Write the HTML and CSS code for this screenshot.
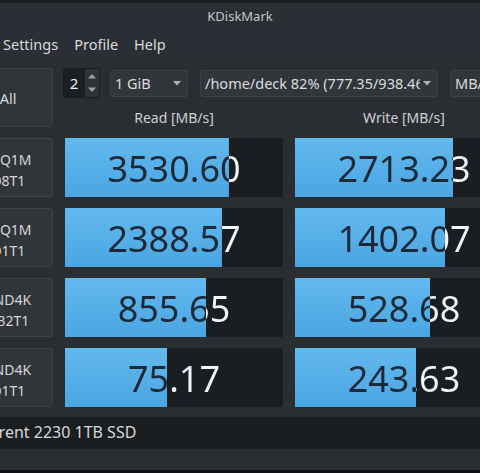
FILE: index.html
```html
<!DOCTYPE html>
<html>
<head>
<meta charset="utf-8">
<link rel="stylesheet" href="styles.css">
</head>
<body>
<div class="edge"></div>
<div class="titlebar">KDiskMark</div>
<div class="menubar">
  <span class="menu">Settings</span>
  <span class="menu">Profile</span>
  <span class="menu">Help</span>
</div>
<div class="grid">
  <button class="btn all">All</button>
  <div class="controls">
    <div class="spin">
      <span class="spin-val">2</span>
      <span class="spin-arrows">
        <svg width="8" height="6" viewBox="0 0 8 6"><path d="M0 5.5 L4 1 L8 5.5 Z" fill="#9ea2a7"/></svg>
        <svg width="8" height="6" viewBox="0 0 8 6"><path d="M0 0.5 L4 5 L8 0.5 Z" fill="#9ea2a7"/></svg>
      </span>
    </div>
    <div class="combo size"><span class="combo-text">1 GiB</span><svg class="caret" width="8" height="5" viewBox="0 0 8 5"><path d="M0 0 L4 4.5 L8 0 Z" fill="#aeb2b6"/></svg></div>
    <div class="combo path"><span class="combo-text">/home/deck 82% (777.35/938.46 GiB)</span><svg class="caret" width="8" height="5" viewBox="0 0 8 5"><path d="M0 0 L4 4.5 L8 0 Z" fill="#aeb2b6"/></svg></div>
    <div class="combo unit"><span class="combo-text">MB/s</span></div>
  </div>
  <div class="head">Read [MB/s]</div>
  <div class="head">Write [MB/s]</div>

  <button class="btn lbl">SEQ1M<br>Q8T1</button>
  <div class="bar" style="--p:75.2%"><span class="val">3530.60</span></div>
  <div class="bar" style="--p:72.5%"><span class="val">2713.23</span></div>

  <button class="btn lbl">SEQ1M<br>Q1T1</button>
  <div class="bar" style="--p:72%"><span class="val">2388.57</span></div>
  <div class="bar" style="--p:68.8%"><span class="val">1402.07</span></div>

  <button class="btn lbl">RND4K<br>Q32T1</button>
  <div class="bar" style="--p:64.7%"><span class="val">855.65</span></div>
  <div class="bar" style="--p:62%"><span class="val">528.68</span></div>

  <button class="btn lbl">RND4K<br>Q1T1</button>
  <div class="bar" style="--p:46.8%"><span class="val">75.17</span></div>
  <div class="bar" style="--p:55.5%"><span class="val">243.63</span></div>

  <div class="device">Sabrent 2230 1TB SSD</div>
</div>
<div class="bottom"></div>
</body>
</html>
```
FILE: styles.css
```css
html, body {
  margin: 0;
  padding: 0;
}
body {
  width: 480px;
  height: 473px;
  overflow: hidden;
  background: #2a2d32;
  font-family: "Noto Sans", "Open Sans", sans-serif;
  color: #d6d8da;
  position: relative;
}
.edge {
  height: 3px;
  background: #1c1e22;
}
.titlebar {
  height: 27px;
  line-height: 26px;
  text-align: center;
  font-size: 13px;
  color: #c4c6c8;
  background: #2b2e34;
}
.menubar {
  height: 28px;
  display: flex;
  align-items: center;
  gap: 16px;
  padding-left: 3px;
  font-size: 14.5px;
  color: #d8dadc;
  background: #2b2e34;
}
.grid {
  margin-top: 10px;
  margin-left: -37px;
  display: grid;
  grid-template-columns: 90px 218px 218px;
  grid-template-rows: 30px 18px 59px 59px 59px 59px 31px;
  column-gap: 12px;
  row-gap: 11px;
}
.btn {
  font-family: "Noto Sans", sans-serif;
  background: #31353a;
  border: 1px solid #3f4348;
  border-radius: 3px;
  color: #d4d6d8;
  padding: 0;
  margin: 0;
}
.all {
  grid-row: 1 / span 2;
  font-size: 14.5px;
}
.lbl {
  font-size: 14px;
  line-height: 21px;
  padding-top: 4px;
}
.controls {
  grid-column: 2 / span 2;
  display: flex;
  align-items: center;
  margin-left: -2px;
  white-space: nowrap;
}
.spin {
  flex: none;
  display: flex;
  height: 30px;
  width: 37px;
  background: #1c1f22;
  border-radius: 2px;
}
.spin-val {
  width: 22px;
  text-align: center;
  line-height: 30px;
  font-size: 15px;
  color: #eef0f2;
}
.spin-arrows {
  width: 14px;
  margin: 1px 0;
  background: #2f3338;
  display: flex;
  flex-direction: column;
  align-items: center;
  justify-content: space-around;
  border-radius: 2px;
}
.combo {
  flex: none;
  height: 27px;
  box-sizing: border-box;
  background: #32363b;
  border: 1px solid #3e4247;
  border-radius: 3px;
  display: flex;
  align-items: center;
  font-size: 14.5px;
  color: #dadcde;
  overflow: hidden;
}
.combo-text {
  padding-left: 4px;
  overflow: hidden;
  flex: 1;
  min-width: 0;
}
.caret {
  flex: none;
  margin: 0 6px 0 3px;
}
.size {
  width: 78px;
  margin-left: 10px;
}
.path {
  width: 238px;
  margin-left: 12px;
}
.unit {
  width: 80px;
  margin-left: 12px;
}
.head {
  text-align: center;
  font-size: 14px;
  line-height: 18px;
  color: #cdd0d2;
}
.bar {
  background: linear-gradient(#62b9ee, #4ba5e1) 0 0 / var(--p) 100% no-repeat, #1b1e21;
  display: flex;
  align-items: center;
}
.val {
  display: block;
  width: 100%;
  text-align: center;
  font-size: 36px;
  line-height: 40px;
  padding-top: 2px;
  background: linear-gradient(to right, #1c2938 var(--p), #f2f4f6 var(--p));
  -webkit-background-clip: text;
  background-clip: text;
  color: transparent;
}
.device {
  grid-column: 1 / span 3;
  margin-top: -1px;
  background: #1b1e21;
  font-size: 16px;
  line-height: 31px;
  padding-left: 8px;
  color: #d6d8da;
}
.bottom {
  position: absolute;
  left: 0;
  right: 0;
  bottom: 0;
  height: 3px;
  background: #0e1013;
}
```
